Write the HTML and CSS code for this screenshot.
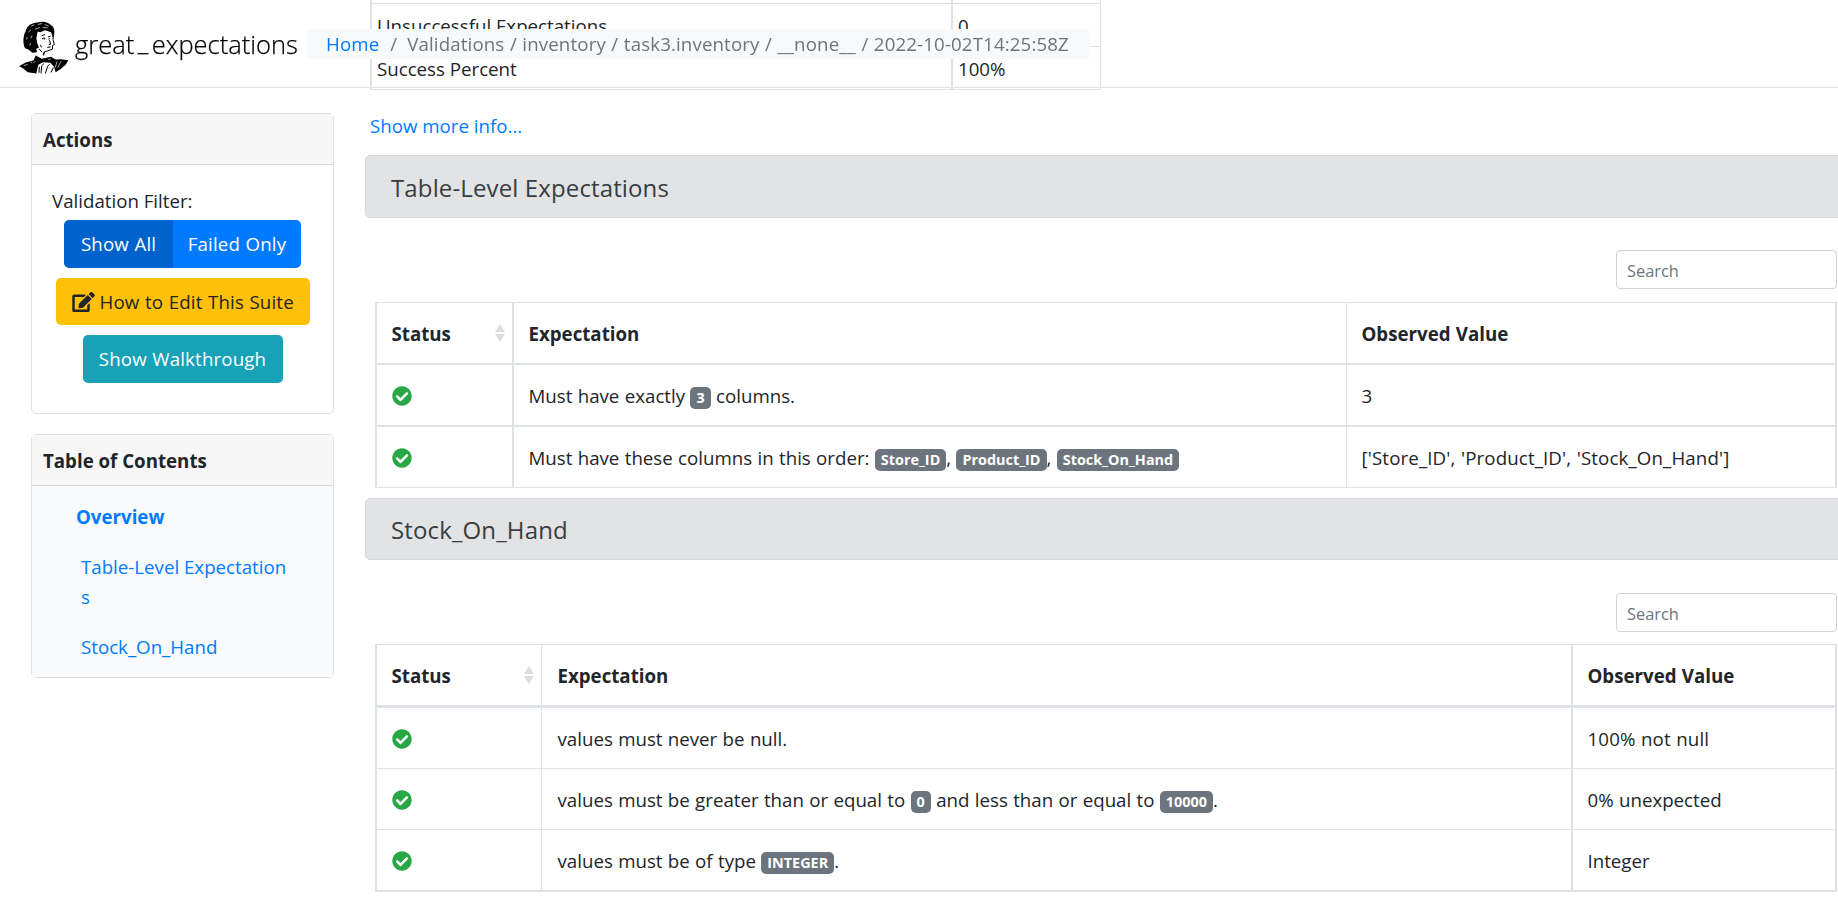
FILE: index.html
```html
<!DOCTYPE html>
<html lang="en">
<head>
<meta charset="utf-8">
<title>great_expectations</title>
<link rel="stylesheet" href="styles.css">
</head>
<body>
<svg class="defs" aria-hidden="true">
  <symbol id="check" viewBox="0 0 512 512"><path d="M504 256c0 136.967-111.033 248-248 248S8 392.967 8 256 119.033 8 256 8s248 111.033 248 248zM227.314 387.314l184-184c6.248-6.248 6.248-16.379 0-22.627l-22.627-22.627c-6.248-6.249-16.379-6.249-22.628 0L216 308.118l-70.059-70.059c-6.248-6.248-16.379-6.248-22.628 0l-22.627 22.627c-6.248 6.248-6.248 16.379 0 22.627l104 104c6.249 6.249 16.379 6.249 22.628.001z"/></symbol>
  <symbol id="sort" viewBox="0 0 10 18"><path d="M5 0l5 8H0zM5 18l5-8H0z"/></symbol>
</svg>
<header class="navbar">
  <svg class="logo" viewBox="26 30 150 164">
    <path d="M44 114C37 98 38 76 46 63C50 46 64 38 82 37C98 31 116 36 128 50C134 60 133 72 129 84L122 66L104 60L90 66L82 64L78 84L81 100L86 112L78 116L80 126L66 128L54 118Z"/>
    <path d="M128 74L128 88L132 103L127 106L126 117L112 122L101 126L100 136" class="line"/>
    <path d="M94 77l10-4M113 80l8-2M95 86l7-3v5M114 87l5-2M117 90l4 12-6 2M111 112l10-2M86 116l9 10M104 124l-6 10M90 104l4 8" class="line"/>
    <path d="M26 168L46 157L70 150L76 136L94 146L122 140L136 148L152 147L174 150L166 164L150 177L136 186L131 170L120 158L98 156L84 164L78 190L52 186L38 174Z"/>
    <path d="M92 190L94 167L101 160M105 190L112 168L118 162M122 187L129 172M86 188L87 170" class="line"/>
    <path d="M62 48l10-4M82 43l13-3M103 43l12 5M54 66l8-7M74 57l14-5M97 52l15 1M48 88l3-7M62 84l3-8M58 106l3-8M40 166l12-3M62 154l3 5M140 154l-5 18M152 154l-10 18M70 158l5-5M114 148l7-2" class="highlight"/>
  </svg>
  <span class="brand">great<span class="underscore">_</span>expectations</span>
  <nav class="breadcrumb"><a class="home">Home</a><span class="slash">/</span><span class="path">Validations / inventory / task3.inventory / __none__ / 2022-10-02T14:25:58Z</span></nav>
</header>
<div class="page">
  <aside class="sidebar">
    <section class="card actions">
      <h2 class="card-title">Actions</h2>
      <div class="actions-body">
        <p class="filter-label">Validation Filter:</p>
        <div class="btn-group"><button class="btn btn-active">Show All</button><button class="btn btn-primary">Failed Only</button></div>
        <button class="btn btn-warning"><svg class="edit" viewBox="0 0 576 512"><path d="M402.600 83.200l90.200 90.200c3.800 3.800 3.800 10 0 13.800L274.400 405.600l-92.800 10.300c-12.400 1.400-22.900-9.100-21.500-21.500l10.300-92.800L388.800 83.200c3.800-3.800 10-3.800 13.800 0zm162-22.900l-48.800-48.800c-15.200-15.200-39.900-15.200-55.200 0l-35.400 35.400c-3.800 3.800-3.800 10 0 13.800l90.200 90.200c3.800 3.800 10 3.800 13.800 0l35.400-35.400c15.200-15.300 15.200-40 0-55.200zM384 346.200V448H64V128h229.800c3.200 0 6.200-1.300 8.500-3.500l40-40c7.600-7.600 2.200-20.500-8.500-20.500H48C21.500 64 0 85.500 0 112v352c0 26.500 21.500 48 48 48h352c26.500 0 48-21.500 48-48V306.200c0-10.700-12.900-16-20.500-8.500l-40 40c-2.200 2.300-3.500 5.300-3.500 8.500z"/></svg><span class="edit-text">How to Edit This Suite</span></button>
        <button class="btn btn-info">Show Walkthrough</button>
      </div>
    </section>
    <section class="card toc">
      <h2 class="card-title">Table of Contents</h2>
      <nav class="toc-body">
        <a class="toc-overview">Overview</a>
        <a class="toc-link">Table-Level Expectations</a>
        <a class="toc-link">Stock_On_Hand</a>
      </nav>
    </section>
  </aside>
  <main class="main">
    <div class="summary">
      <div class="summary-row summary-clip"><span></span><span></span></div>
      <div class="summary-row"><span>Unsuccessful Expectations</span><span>0</span></div>
      <div class="summary-row"><span>Success Percent</span><span>100%</span></div>
    </div>
    <a class="more">Show more info...</a>

    <h3 class="section-title">Table-Level Expectations</h3>
    <input class="search" placeholder="Search">
    <div class="grid grid-table-level">
      <div class="row head"><div class="cell"><span class="th">Status</span><svg class="sort"><use href="#sort"/></svg></div><div class="cell"><span class="th">Expectation</span></div><div class="cell"><span class="th">Observed Value</span></div></div>
      <div class="row"><div class="cell"><svg class="check"><use href="#check"/></svg></div><div class="cell">Must have exactly <span class="badge">3</span> columns.</div><div class="cell">3</div></div>
      <div class="row last"><div class="cell"><svg class="check"><use href="#check"/></svg></div><div class="cell">Must have these columns in this order: <span class="badge">Store_ID</span>, <span class="badge">Product_ID</span>, <span class="badge">Stock_On_Hand</span></div><div class="cell observed">['Store_ID', 'Product_ID', 'Stock_On_Hand']</div></div>
    </div>

    <h3 class="section-title section-second">Stock_On_Hand</h3>
    <input class="search search-second" placeholder="Search">
    <div class="grid grid-stock">
      <div class="row head"><div class="cell"><span class="th">Status</span><svg class="sort"><use href="#sort"/></svg></div><div class="cell"><span class="th">Expectation</span></div><div class="cell"><span class="th">Observed Value</span></div></div>
      <div class="row"><div class="cell"><svg class="check"><use href="#check"/></svg></div><div class="cell">values must never be null.</div><div class="cell observed">100% not null</div></div>
      <div class="row"><div class="cell"><svg class="check"><use href="#check"/></svg></div><div class="cell">values must be greater than or equal to <span class="badge">0</span> and less than or equal to <span class="badge">10000</span>.</div><div class="cell">0% unexpected</div></div>
      <div class="row last"><div class="cell"><svg class="check"><use href="#check"/></svg></div><div class="cell">values must be of type <span class="badge">INTEGER</span>.</div><div class="cell">Integer</div></div>
    </div>
  </main>
</div>
</body>
</html>
```
FILE: styles.css
```css
* { box-sizing: border-box; }
body {
  margin: 0;
  height: 910px;
  overflow: hidden;
  background: #fff;
  color: #212529;
  font-family: "Open Sans", "Noto Sans", sans-serif;
  font-size: 18.7px;
  line-height: 30px;
}
h2, h3, p { margin: 0; font-weight: 400; }
.defs { position: absolute; width: 0; height: 0; }

/* Fixed, see-through navigation bar */
.navbar {
  position: fixed;
  z-index: 2;
  top: 0;
  left: 0;
  width: 1838px;
  height: 88px;
  padding-left: 19px;
  display: flex;
  align-items: center;
  border-bottom: 1px solid #dee2e6;
}
.logo { width: 50px; height: 55px; margin-top: 7px; flex: none; }
.logo .line { fill: none; stroke: #000; stroke-width: 3; }
.logo .highlight { fill: none; stroke: #fff; stroke-width: 2; }
.brand {
  width: 231px;
  margin-left: 6px;
  color: #000;
  font-size: 25.5px;
  font-weight: 300;
  white-space: nowrap;
  -webkit-text-stroke: 0.25px #000;
}
.underscore { display: inline-block; margin: 0 3.5px; transform: translateY(-3px); }
.breadcrumb {
  width: 784px;
  height: 30px;
  padding-left: 20px;
  display: flex;
  border-radius: 5px;
  background: #f8f9fa;
  color: #6c757d;
  white-space: nowrap;
}
.home { color: #007bff; letter-spacing: 0.13px; }
.slash { margin: 0 10px 0 11px; }
.path { letter-spacing: 0.13px; word-spacing: 0.5px; }

.page { display: flex; width: 1900px; }

.sidebar { width: 334px; padding: 113px 0 0 31px; flex: none; }
.card { border: 1px solid #dfdfdf; border-radius: 5px; }
.card-title {
  height: 51px;
  padding: 11px 0 0 11px;
  border-bottom: 1px solid #d8dadc;
  background: #f7f7f7;
  font-size: 18.7px;
  font-weight: 700;
}
.actions { height: 301px; }
.actions-body { display: flex; flex-direction: column; align-items: center; }
.filter-label { align-self: flex-start; margin: 21px 0 4px 20px; }
.btn {
  height: 48px;
  padding: 0;
  border: 0;
  border-radius: 5px;
  color: #fff;
  font: inherit;
  letter-spacing: 0.15px;
  word-spacing: 0.5px;
}
.btn-group { display: flex; margin-bottom: 10px; }
.btn-active { width: 109px; border-radius: 5px 0 0 5px; background: #0062cc; }
.btn-primary { width: 128px; border-radius: 0 5px 5px 0; background: #007bff; }
.btn-warning {
  width: 254px;
  height: 47px;
  margin-bottom: 10px;
  padding-left: 16px;
  display: flex;
  align-items: center;
  background: #ffc107;
  color: #212529;
}
.edit { width: 23px; height: 20px; margin-right: 5px; fill: #212529; }
.btn-info { width: 200px; background: #17a2b8; }
.toc { height: 244px; margin-top: 20px; }
.toc-body {
  height: 191px;
  padding: 16px 44px 0 44px;
  display: flex;
  flex-direction: column;
  background: #f8fafc;
}
.toc-body a { color: #007bff; }
.toc-overview { font-weight: 700; }
.toc-link { width: 208px; margin: 20px 0 0 5px; word-break: break-all; }

.main { width: 1500px; margin-left: 31px; flex: none; }
.summary { width: 731px; margin-left: 5px; border-left: 2px solid #dee2e6; border-right: 1px solid #dee2e6; }
.summary-row {
  height: 43px;
  display: grid;
  grid-template-columns: 579px 149px;
  border-bottom: 1px solid #dee2e6;
}
.summary-row span { padding: 7px 0 0 5px; }
.summary-row span + span { border-left: 2px solid #dee2e6; }
.summary-clip { height: 4px; }
.summary-clip span { padding: 0; }
.more { display: block; margin: 21px 0 14px 5px; color: #007bff; }

.section-title {
  height: 63px;
  padding: 17px 0 0 25px;
  border: 1px solid #d6d8db;
  border-radius: 5px;
  background: #e2e3e5;
  color: #383d41;
  font-size: 24px;
  letter-spacing: 0.13px;
}
.section-second { height: 62px; margin-top: 10px; padding-top: 16px; }
.search {
  display: block;
  width: 221px;
  height: 39px;
  margin: 32px 0 13px 1251px;
  padding: 1px 10px 0;
  border: 1px solid #ced4da;
  border-radius: 4px;
  font: 16.4px "Open Sans", "Noto Sans", sans-serif;
}
.search::placeholder { color: #6c757d; }
.search-second { margin: 33px 0 12px 1251px; }

.grid {
  width: 1462px;
  margin-left: 10px;
  border: solid #dee2e6;
  border-width: 1px 2px 0;
}
.row { display: grid; height: 61px; border-bottom: 1px solid #dee2e6; }
.cell { display: block; padding: 16px 0 0 14.5px; white-space: nowrap; word-spacing: 0.5px; }
.cell + .cell { border-left: 1px solid #dee2e6; padding-left: 14.5px; }
.observed { letter-spacing: 0.13px; }
.th { font-weight: 700; }
.check { display: block; width: 20px; height: 20px; margin-top: 4.5px; fill: #28a745; }
.sort { width: 10px; height: 18px; fill: #ddd; }
.head .cell:first-child { display: flex; justify-content: space-between; padding-right: 7px; }
.head .sort { margin-top: 5px; }
.grid-table-level .row { grid-template-columns: 135px 834px 489px; height: 62px; border-bottom-width: 2px; }
.grid-table-level .row.last { height: 61px; border-bottom-width: 1px; }
.grid-table-level .cell:nth-child(2) { border-left-width: 2px; }
.grid-stock .row { grid-template-columns: 164px 1030px 264px; }
.grid-stock .head { height: 63px; border-bottom-width: 3px; }
.grid-stock .last { height: 62px; border-bottom-width: 2px; }
.grid-stock .cell:nth-child(2) { padding-left: 15.5px; }
.grid-stock .cell:nth-child(3) { border-left-width: 2px; }
.badge {
  display: inline-block;
  height: 22px;
  padding: 0 6px;
  border-radius: 5px;
  background: #6c757d;
  color: #fff;
  font-size: 14.4px;
  font-weight: 700;
  line-height: 22px;
}
```
